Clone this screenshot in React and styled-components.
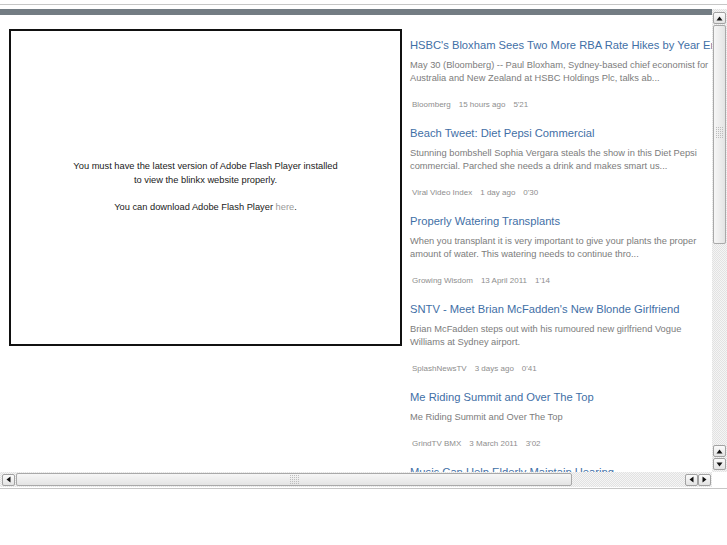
import React from "react";
import styled, { createGlobalStyle } from "styled-components";

const GlobalStyle = createGlobalStyle`
  html, body { margin: 0; padding: 0; background: #ffffff; }
  body { font-family: "Liberation Sans", Arial, sans-serif; color: #222; }
`;

const Page = styled.div`
  width: 727px;
  height: 545px;
  padding-top: 4px;
  box-sizing: border-box;
  overflow: hidden;
`;

const Rule = styled.div`
  height: 1px;
  background: #c6c6c6;
  margin-bottom: ${(p) => p.$gap || 0}px;
  margin-top: ${(p) => p.$top || 0}px;
`;

const Frame = styled.div`
  display: grid;
  grid-template-columns: 712px 15px;
  grid-template-rows: 463px 15px;
`;

const Viewport = styled.div`
  overflow: hidden;
  position: relative;
`;

const Content = styled.div`
  width: 870px;
`;

const HeadBar = styled.div`
  height: 6px;
  background: #737c83;
`;

const Body = styled.div`
  display: flex;
  align-items: flex-start;
  padding: 14px 0 0 9px;
  gap: 8px;
`;

const FlashBox = styled.div`
  width: 393px;
  height: 317px;
  box-sizing: border-box;
  border: 2px solid #111;
  display: flex;
  flex-direction: column;
  align-items: center;
  justify-content: center;
  font-size: 9.3px;
  line-height: 14px;
  color: #1a1a1a;
  text-align: center;
  padding-bottom: 2px;
`;

const FlashLine = styled.div`
  margin-top: ${(p) => p.$top || 0}px;
`;

const HereLink = styled.a`
  color: #9a9a9a;
  text-decoration: none;
`;

const List = styled.div`
  width: 302px;
  padding-top: 8px;
`;

const Item = styled.div`
  padding-bottom: 15px;
`;

const Title = styled.a`
  display: block;
  font-size: 11.2px;
  line-height: 16px;
  color: #3f6fa6;
  white-space: nowrap;
  text-decoration: none;
`;

const Desc = styled.div`
  margin-top: 5.5px;
  font-size: 9.3px;
  line-height: 13px;
  color: #7c7c7c;
`;

const DescLine = styled.div`
  white-space: nowrap;
`;

const Meta = styled.div`
  margin-top: 15.5px;
  display: flex;
  gap: 8px;
  padding-left: 2px;
  font-size: 8px;
  line-height: 10px;
  color: #8e8e8e;
  white-space: nowrap;
`;

const stipple = `
  background-color: #efefef;
  background-image: repeating-conic-gradient(#e2e2e2 0 25%, #f5f5f5 0 50%);
  background-size: 2px 2px;
`;

const VBar = styled.div`
  ${stipple}
  display: flex;
  flex-direction: column;
  align-items: center;
  padding: 3px 0 2px;
  box-sizing: border-box;
`;

const HBar = styled.div`
  ${stipple}
  display: flex;
  align-items: center;
  padding: 0 1px 0 2px;
  box-sizing: border-box;
`;

const Corner = styled.div`
  background: #ffffff;
`;

const Spacer = styled.div`
  flex: 1;
`;

const ArrowButton = styled.div`
  width: 13px;
  height: 12px;
  box-sizing: border-box;
  border: 1px solid #a2a2a2;
  border-radius: 2px;
  background: linear-gradient(#fbfbfb, #e3e3e3);
  display: flex;
  align-items: center;
  justify-content: center;
  margin-top: ${(p) => p.$top || 0}px;
`;

const VThumb = styled.div`
  width: 13px;
  height: 219px;
  margin-top: 1px;
  box-sizing: border-box;
  border: 1px solid #a9a9a9;
  border-radius: 2px;
  background: linear-gradient(to right, #f6f6f6, #e4e4e4);
  display: flex;
  align-items: center;
  justify-content: center;
  padding-bottom: 4px;
`;

const HThumb = styled.div`
  width: 556px;
  height: 13px;
  margin-left: 1px;
  box-sizing: border-box;
  border: 1px solid #a9a9a9;
  border-radius: 2px;
  background: linear-gradient(#f6f6f6, #e4e4e4);
  display: flex;
  align-items: center;
  justify-content: center;
`;

const Grip = styled.div`
  width: ${(p) => p.$w}px;
  height: ${(p) => p.$h}px;
  background-image: repeating-conic-gradient(#bdbdbd 0 25%, transparent 0 100%);
  background-size: 2px 2px;
`;

const Arrow = ({ dir }) => {
  const pts = {
    up: "0.5,4.5 3.5,0.5 6.5,4.5",
    down: "0.5,0.5 3.5,4.5 6.5,0.5",
    left: "4.5,0.5 0.5,3.5 4.5,6.5",
    right: "0.5,0.5 4.5,3.5 0.5,6.5",
  }[dir];
  const vertical = dir === "up" || dir === "down";
  return (
    <svg width={vertical ? 7 : 5} height={vertical ? 5 : 7} viewBox={vertical ? "0 0 7 5" : "0 0 5 7"}>
      <polygon points={pts} fill="#111" />
    </svg>
  );
};

const items = [
  {
    title: "HSBC's Bloxham Sees Two More RBA Rate Hikes by Year End",
    desc: [
      "May 30 (Bloomberg) -- Paul Bloxham, Sydney-based chief economist for",
      "Australia and New Zealand at HSBC Holdings Plc, talks ab...",
    ],
    meta: ["Bloomberg", "15 hours ago", "5'21"],
  },
  {
    title: "Beach Tweet: Diet Pepsi Commercial",
    desc: [
      "Stunning bombshell Sophia Vergara steals the show in this Diet Pepsi",
      "commercial. Parched she needs a drink and makes smart us...",
    ],
    meta: ["Viral Video Index", "1 day ago", "0'30"],
  },
  {
    title: "Properly Watering Transplants",
    desc: [
      "When you transplant it is very important to give your plants the proper",
      "amount of water. This watering needs to continue thro...",
    ],
    meta: ["Growing Wisdom", "13 April 2011", "1'14"],
  },
  {
    title: "SNTV - Meet Brian McFadden's New Blonde Girlfriend",
    desc: [
      "Brian McFadden steps out with his rumoured new girlfriend Vogue",
      "Williams at Sydney airport.",
    ],
    meta: ["SplashNewsTV", "3 days ago", "0'41"],
  },
  {
    title: "Me Riding Summit and Over The Top",
    desc: ["Me Riding Summit and Over The Top"],
    meta: ["GrindTV BMX", "3 March 2011", "3'02"],
  },
  {
    title: "Music Can Help Elderly Maintain Hearing",
    desc: [
      "Older people who have played a musical instrument throughout their",
      "lives may be better at hearing in noisy places...",
    ],
    meta: ["HealthDay", "2 days ago", "1'05"],
  },
];

export default function App() {
  return (
    <>
      <GlobalStyle />
      <Page>
        <Rule $gap={4} />
        <Frame>
          <Viewport>
            <Content>
              <HeadBar />
              <Body>
                <FlashBox>
                  <FlashLine>You must have the latest version of Adobe Flash Player installed</FlashLine>
                  <FlashLine>to view the blinkx website properly.</FlashLine>
                  <FlashLine $top={13}>
                    You can download Adobe Flash Player <HereLink href="#">here</HereLink>.
                  </FlashLine>
                </FlashBox>
                <List>
                  {items.map((it) => (
                    <Item key={it.title}>
                      <Title href="#">{it.title}</Title>
                      <Desc>
                        {it.desc.map((l) => (
                          <DescLine key={l}>{l}</DescLine>
                        ))}
                      </Desc>
                      <Meta>
                        {it.meta.map((m) => (
                          <span key={m}>{m}</span>
                        ))}
                      </Meta>
                    </Item>
                  ))}
                </List>
              </Body>
            </Content>
          </Viewport>
          <VBar>
            <ArrowButton>
              <Arrow dir="up" />
            </ArrowButton>
            <VThumb>
              <Grip $w={9} $h={11} />
            </VThumb>
            <Spacer />
            <ArrowButton>
              <Arrow dir="up" />
            </ArrowButton>
            <ArrowButton $top={1}>
              <Arrow dir="down" />
            </ArrowButton>
          </VBar>
          <HBar>
            <ArrowButton>
              <Arrow dir="left" />
            </ArrowButton>
            <HThumb>
              <Grip $w={11} $h={9} />
            </HThumb>
            <Spacer />
            <ArrowButton>
              <Arrow dir="left" />
            </ArrowButton>
            <ArrowButton>
              <Arrow dir="right" />
            </ArrowButton>
          </HBar>
          <Corner />
        </Frame>
        <Rule $top={1} />
      </Page>
    </>
  );
}
